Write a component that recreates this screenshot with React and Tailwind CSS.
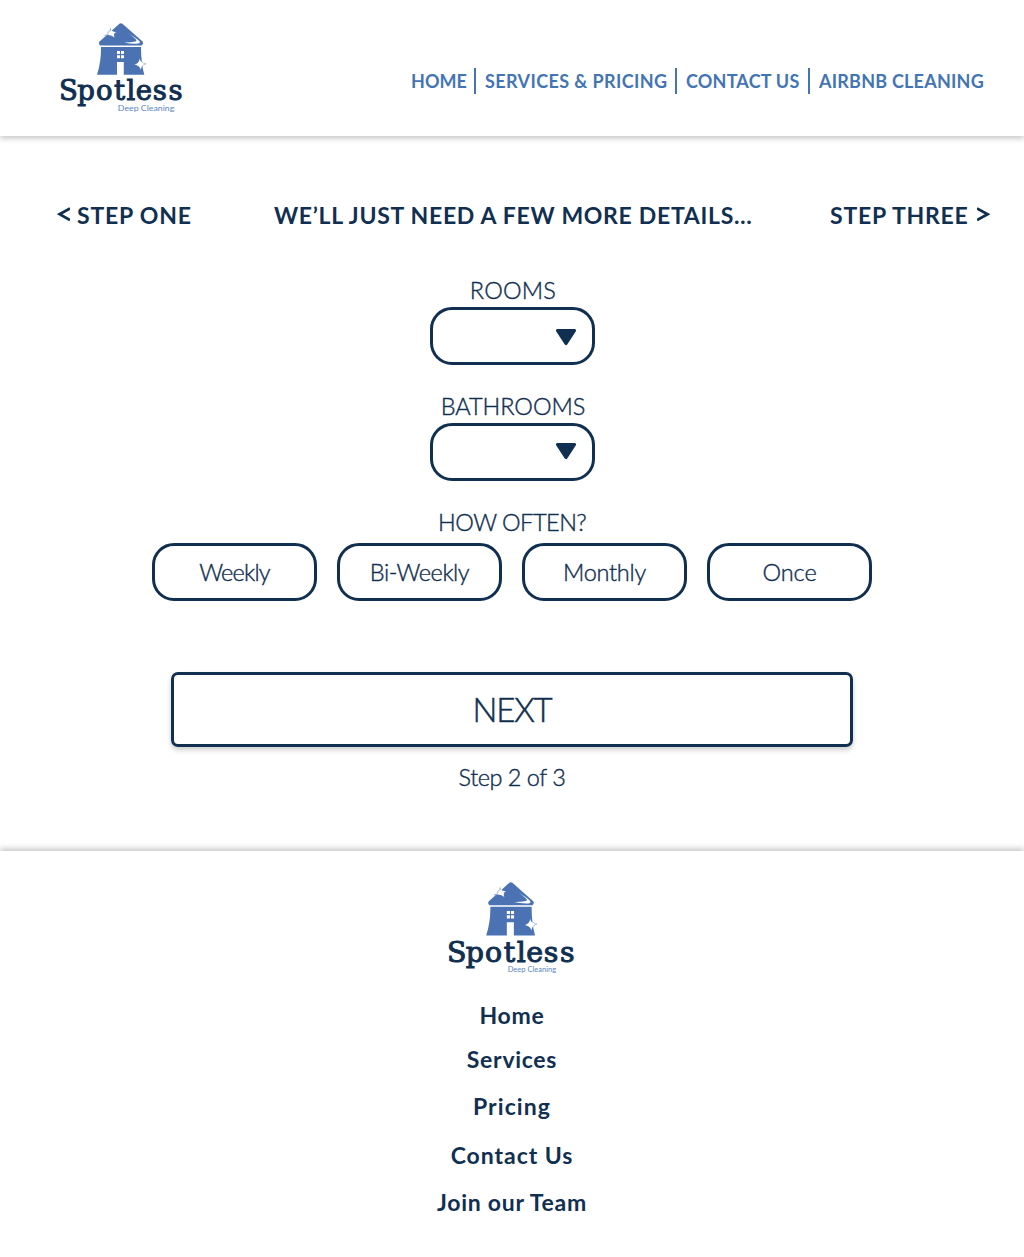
import React from "react";

function Logo({ className, taglineWidth }) {
  return (
    <svg viewBox="0 0 124 91" className={className} role="img" aria-label="Spotless Deep Cleaning">
      <g fill="#4b73b3">
        <path d="M59.4 .7 Q60.9 -.4 62.4 .7 L82.6 18.6 Q84 20.6 81.8 22.4 H40.2 Q38 20.6 39.6 18.6 Z" />
        <path d="M41 24 H81 Q81 40 84.3 51.7 H63.8 V39 H57 V51.7 H37 Q41.4 38 41 24 Z" />
      </g>
      <path d="M68.5 10.5 Q76 15 79.6 18.3 Q80.8 20.8 76 20.8 Q69 20.6 64 19.4 Q71 19.5 75.5 18.4 Q77.3 17.8 75.5 16 Q72.5 13 68.5 10.5Z" fill="#fff" />
      <path d="M57 28h3v3h-3zM61 28h3v3h-3zM57 32.3h3v3h-3zM61 32.3h3v3h-3z" fill="#fff" />
      <path d="M50.4 5 Q51.3 9 56.4 8.9 Q52.7 10.2 54.6 14.6 Q51.4 11.4 46.4 12.2 Q50.3 10 50.4 5Z" fill="#fff" />
      <path d="M47.2 10.2 L50 7.6 M44.4 12.4 L48.4 11.6 M50.4 5.2 L50.6 8" stroke="#7f9ccb" strokeWidth=".8" />
      <path d="M79.6 35.6 Q80.2 40 86.2 40.8 Q81.4 41.8 80.9 46.8 Q79.2 42.4 74.6 41.6 Q79.2 40.4 79.6 35.6Z" fill="#fff" />
      <path d="M82 38.6 Q82.8 40.2 86.2 40.8 Q83.2 41.4 82.4 43" fill="none" stroke="#9db4d8" strokeWidth=".7" />
      <text x="-.9 17.2 35.9 53.9 66.6 75.8 92.8 108.6" y="77.3" fill="#112f51" stroke="#112f51" strokeWidth="1" className="font-['DejaVu_Serif',serif] text-[27.5px]">Spotless</text>
      <text x="57.8" y="87.6" textLength={taglineWidth} lengthAdjust="spacingAndGlyphs" fill="#5c86c2" className="font-['Lato',sans-serif] text-[8px]">Deep Cleaning</text>
    </svg>
  );
}

const nav = [
  { label: "HOME", cls: "w-[63px] tracking-[0.05px]" },
  { label: "SERVICES & PRICING", cls: "w-[201px] tracking-[0.39px]" },
  { label: "CONTACT US", cls: "w-[133px] tracking-[0.2px]" },
  { label: "AIRBNB CLEANING", cls: "tracking-[0.22px]" },
];

function Select({ label, labelClass, arrowClass }) {
  return (
    <div className="flex flex-col items-center">
      <span className={`h-[34px] pt-[4px] pl-[2px] text-[23.5px] leading-[26px] ${labelClass}`}>{label}</span>
      <button aria-label={label} className="flex h-[58px] w-[165px] justify-end rounded-[22px] border-3 border-[#112f51] pr-[15px]">
        <svg viewBox="0 0 22 18" className={`h-[18px] w-[22px] ${arrowClass}`}>
          <path d="M2.4 2.4 H19.6 L11 15.6 Z" fill="#112f51" stroke="#112f51" strokeWidth="3" strokeLinejoin="round" />
        </svg>
      </button>
    </div>
  );
}

const frequencies = [
  { label: "Weekly", cls: "tracking-[-0.8px]" },
  { label: "Bi-Weekly", cls: "tracking-[-0.47px]" },
  { label: "Monthly", cls: "tracking-[-0.27px]" },
  { label: "Once", cls: "tracking-[-0.04px]" },
];

const footerLinks = [
  { label: "Home", cls: "h-[44px] tracking-[0.72px]" },
  { label: "Services", cls: "h-[47px] tracking-[0.7px]" },
  { label: "Pricing", cls: "h-[49px] tracking-[1.1px]" },
  { label: "Contact Us", cls: "h-[47px] tracking-[0.95px]" },
  { label: "Join our Team", cls: "h-[47px] tracking-[0.71px]" },
];

export default function App() {
  return (
    <div className="flex h-[1257px] w-[1024px] flex-col overflow-hidden bg-white font-['Lato',sans-serif] text-[#112f51]">
      <header className="flex h-[136px] shrink-0 justify-between pl-[60px] shadow-[0_2px_6px_rgba(0,0,0,0.25)]">
        <Logo className="mt-[23px] h-[91px] w-[124px] overflow-visible" taglineWidth="56.5" />
        <nav className="mt-[68px] flex h-[26px] w-[613px] items-center text-[18px] leading-[26px] font-bold text-[#4375b5]">
          {nav.map((n, i) => (
            <a key={n.label} className={`flex h-full shrink-0 items-center whitespace-nowrap ${i ? "border-l-2 border-[#4375b5] pl-[9px]" : ""} ${n.cls}`}>
              {n.label}
            </a>
          ))}
        </nav>
      </header>

      <main className="flex h-[715px] shrink-0 flex-col items-center">
        <div className="mt-[66px] flex h-[26px] w-full text-[23px] leading-[26px] font-bold whitespace-nowrap">
          <a className="flex w-[217px] pl-[57px] tracking-[0.8px]">
            <svg viewBox="0 0 13 15" className="mt-[5px] mr-[7px] h-[15px] w-[13px]"><path d="M13 1.5 L2.6 7.2 L13 13" fill="none" stroke="#112f51" strokeWidth="2.8" /></svg>
            STEP ONE
          </a>
          <h1 className="ml-[57px] w-[556px] tracking-[0.7px]">WE’LL JUST NEED A FEW MORE DETAILS…</h1>
          <a className="flex tracking-[0.77px]">
            STEP THREE
            <svg viewBox="0 0 13 15" className="mt-[5px] ml-[8px] h-[15px] w-[13px]"><path d="M0 1.5 L10.6 7.2 L0 13" fill="none" stroke="#112f51" strokeWidth="2.8" /></svg>
          </a>
        </div>

        <div className="mt-[45px] flex flex-col items-center gap-6 font-light [-webkit-text-stroke:0.4px]">
          <Select label="ROOMS" labelClass="tracking-[0.2px]" arrowClass="mt-[18px]" />
          <Select label="BATHROOMS" labelClass="tracking-[-0.06px]" arrowClass="mt-[16px]" />
          <div className="flex flex-col items-center">
            <span className="h-[38px] pt-[4px] text-[23.5px] leading-[26px] tracking-[-0.48px]">HOW OFTEN?</span>
            <div className="flex gap-5">
              {frequencies.map((f) => (
                <button key={f.label} className={`h-[58px] w-[165px] rounded-[22px] border-3 border-[#112f51] text-[23.5px] leading-[26px] ${f.cls}`}>
                  {f.label}
                </button>
              ))}
            </div>
          </div>
        </div>

        <button className="mt-[71px] h-[75px] w-[682px] rounded-[7px] border-3 border-[#112f51] pb-[2px] text-[33px] leading-[36px] font-light tracking-[-1.2px] shadow-[0_3px_5px_rgba(0,0,0,0.2)] [-webkit-text-stroke:0.5px]">
          NEXT
        </button>
        <p className="mt-[17px] text-[23.5px] leading-[26px] font-light tracking-[-0.49px] [-webkit-text-stroke:0.4px]">Step 2 of 3</p>
      </main>

      <footer className="flex h-[406px] shrink-0 flex-col items-center shadow-[0_-2px_6px_rgba(0,0,0,0.25)]">
        <Logo className="mt-[31px] h-[94px] w-[128px] overflow-visible" taglineWidth="47" />
        <nav className="mt-[26px] flex flex-col items-center text-[23px] leading-[26px] font-bold">
          {footerLinks.map((l) => (
            <a key={l.label} className={l.cls}>{l.label}</a>
          ))}
        </nav>
      </footer>
    </div>
  );
}
